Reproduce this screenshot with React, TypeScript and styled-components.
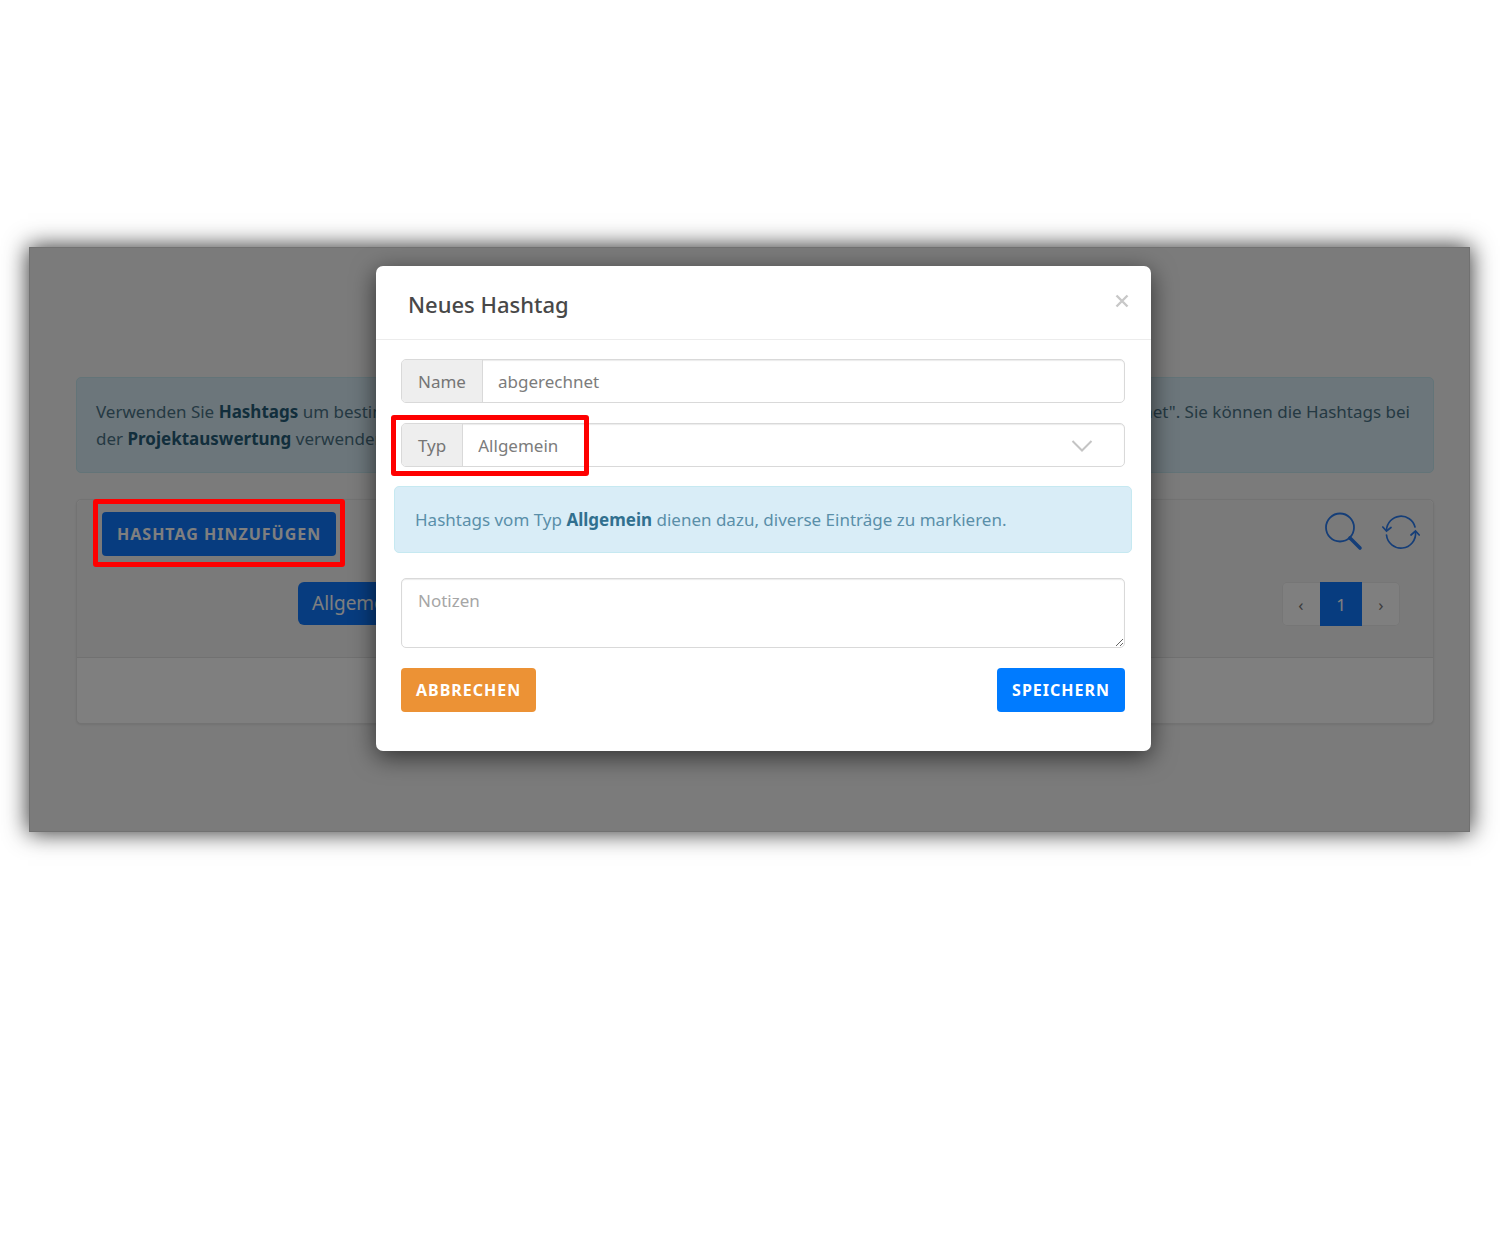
import React from "react";
import styled, { createGlobalStyle } from "styled-components";

const GlobalStyle = createGlobalStyle`
  *, *::before, *::after { box-sizing: border-box; }
  body {
    margin: 0;
    background: #fff;
    color: #757575;
    font-family: "Noto Sans", "Open Sans", sans-serif;
    font-size: 17px;
    line-height: 27px;
  }
  button, input, select, textarea { font: inherit; }
`;

const Page = styled.main`
  padding: 247px 30px 60px 29px;
`;

const Frame = styled.section`
  position: relative;
  min-height: 584px;
  padding: 130px 36px 108px 47px;
  background: #f6f6f6;
  box-shadow: 0 0 22px 1px rgba(0, 0, 0, 0.8);
`;

const Alert = styled.div`
  padding: 20px;
  border: 1px solid #c6e9f1;
  border-radius: 5px;
  background: #d9edf7;
  color: #5a8fa9;

  strong { color: #31708f; }
`;

const PageAlert = styled(Alert)`
  margin-bottom: 26px;
  padding: 20px 23px 20px 19px;
  color: #4a7386;

  strong { color: #245c78; }
`;

const AlertLine = styled.div`
  display: flex;
  justify-content: space-between;
  white-space: nowrap;
`;

const Card = styled.div`
  border: 1px solid #e6e6e6;
  border-radius: 5px;
  background: #fff;
  box-shadow: 0 1px 2px rgba(0, 0, 0, 0.08);
`;

const CardHeader = styled.div`
  height: 158px;
  padding: 12px 13px 0 25px;
  border-bottom: 1px solid #e2e2e2;
  border-radius: 5px 5px 0 0;
  background: #f5f5f5;
`;

const CardBody = styled.div`
  height: 65px;
`;

const Toolbar = styled.div`
  display: flex;
  align-items: flex-start;
  justify-content: space-between;
  margin-bottom: 26px;
`;

const Filters = styled.div`
  display: flex;
  justify-content: space-between;
  padding: 0 20px 0 196px;
`;

const Button = styled.button<{ $tone?: "primary" | "warning" }>`
  height: 44px;
  padding: 0 15px;
  border: 0;
  border-radius: 4px;
  background: ${(p) => (p.$tone === "warning" ? "#ec9235" : "#007bff")};
  color: #fff;
  font-size: 16px;
  font-weight: 700;
  letter-spacing: 1px;
  text-transform: uppercase;
`;

const FilterButton = styled.button`
  height: 43px;
  padding: 0 14px;
  border: 0;
  border-radius: 6px;
  background: #0f79ff;
  color: #fff;
  font-size: 19px;
`;

const PrimaryAction = styled(Button)`
  background: #0f79ff;
`;

const IconRow = styled.div`
  display: flex;
  gap: 18px;
`;

const IconButton = styled.button`
  display: flex;
  padding: 0;
  border: 0;
  background: none;
  color: #2b7cf0;
`;

const Pagination = styled.nav`
  display: flex;
  height: 44px;
  border-radius: 5px;
  background: #fff;
  box-shadow: inset 0 0 0 1px #ececec;
`;

const PageButton = styled.button<{ $active?: boolean }>`
  width: ${(p) => (p.$active ? 42 : 38)}px;
  padding: 0;
  border: 0;
  background: ${(p) => (p.$active ? "#0f79ff" : "transparent")};
  color: ${(p) => (p.$active ? "#fff" : "#777")};
`;

const Highlighted = styled.div`
  position: relative;
  display: flex;
`;

const Marker = styled.span<{ $top: number; $left: number; $width: number; $height: number }>`
  position: absolute;
  z-index: 3;
  top: ${(p) => p.$top}px;
  left: ${(p) => p.$left}px;
  width: ${(p) => p.$width}px;
  height: ${(p) => p.$height}px;
  border: 5px solid #fe0000;
  border-radius: 3px;
  pointer-events: none;
`;

const Backdrop = styled.div`
  position: absolute;
  inset: 0;
  z-index: 1;
  display: flex;
  align-items: flex-start;
  justify-content: center;
  padding: 19px 0 0 28px;
  background: rgba(0, 0, 0, 0.5);
  box-shadow: inset 0 0 0 1px rgba(0, 0, 0, 0.08);
`;

const Dialog = styled.div`
  width: 775px;
  max-width: 100%;
  border-radius: 7px;
  background: #fff;
  box-shadow: 0 6px 24px rgba(0, 0, 0, 0.6);
`;

const DialogHeader = styled.header`
  display: flex;
  align-items: flex-start;
  justify-content: space-between;
  height: 74px;
  padding: 22px 22px 0 32px;
  border-bottom: 1px solid #ececec;
`;

const Title = styled.h2`
  margin: 0;
  color: #484848;
  font-size: 22px;
  font-weight: 500;
  line-height: 32px;
`;

const CloseButton = styled.button`
  display: flex;
  margin-top: 6px;
  padding: 0;
  border: 0;
  background: none;
  color: #c8c8c8;
`;

const Form = styled.form`
  display: flex;
  flex-direction: column;
  gap: 20px;
  padding: 19px 26px 39px 25px;
`;

const InputGroup = styled.div`
  position: relative;
  display: flex;
  height: 44px;
  border: 1px solid #d9d9d9;
  border-radius: 5px;
  box-shadow: inset 0 1px 1px rgba(0, 0, 0, 0.08);
`;

const Addon = styled.label`
  display: flex;
  align-items: center;
  padding: 0 16px;
  border-right: 1px solid #d9d9d9;
  border-radius: 4px 0 0 4px;
  background: #eee;
`;

const TextInput = styled.input`
  flex: 1;
  min-width: 0;
  padding: 0 15px;
  border: 0;
  outline: 0;
  background: transparent;
  color: #7c7c7c;
`;

const Select = styled.select`
  flex: 1;
  min-width: 0;
  padding: 0 15px;
  border: 0;
  outline: 0;
  appearance: none;
  background: transparent;
  color: #7c7c7c;
`;

const SelectArrow = styled.svg`
  position: absolute;
  top: 16px;
  right: 31px;
  pointer-events: none;
`;

const DialogAlert = styled(Alert)`
  margin: -1px -7px 5px;
  padding: 19px 20px;
`;

const Notes = styled.textarea`
  display: block;
  width: 100%;
  height: 70px;
  padding: 8px 16px;
  border: 1px solid #d9d9d9;
  border-radius: 5px;
  outline: 0;
  box-shadow: inset 0 1px 1px rgba(0, 0, 0, 0.08);
  resize: vertical;

  &::placeholder { color: #a6a6a6; }
`;

const Actions = styled.div`
  display: flex;
  justify-content: space-between;
`;

export default function App() {
  return (
    <>
      <GlobalStyle />
      <Page>
        <Frame>
          <PageAlert>
            <AlertLine>
              <span>
                Verwenden Sie <strong>Hashtags</strong> um bestimmte Einträge zu markieren,
              </span>
              <span>z.B. mit "abgerechnet". Sie können die Hashtags bei</span>
            </AlertLine>
            <AlertLine>
              <span>
                der <strong>Projektauswertung</strong> verwenden.
              </span>
            </AlertLine>
          </PageAlert>

          <Card>
            <CardHeader>
              <Toolbar>
                <Highlighted>
                  <PrimaryAction type="button">Hashtag hinzufügen</PrimaryAction>
                  <Marker $top={-13} $left={-9} $width={252} $height={68} />
                </Highlighted>
                <IconRow>
                  <IconButton type="button" aria-label="Suchen">
                    <svg width="40" height="40" viewBox="0 0 40 40" fill="none" stroke="currentColor">
                      <circle cx="16" cy="15.5" r="14" strokeWidth="1.8" />
                      <path d="M26 26 36 36" strokeWidth="3.6" strokeLinecap="round" />
                    </svg>
                  </IconButton>
                  <IconButton type="button" aria-label="Aktualisieren">
                    <svg width="38" height="40" viewBox="0 0 38 40" fill="none" stroke="currentColor" strokeWidth="1.7" strokeLinecap="round">
                      <path d="M4.500 18A14.500 14.500 0 0 1 33 15" />
                      <path d="M.8 15 4.500 19 9 15.500" />
                      <path d="M33.500 20A14.500 14.500 0 0 1 4.500 23" />
                      <path d="M29 23 33.500 19 37.200 23" />
                    </svg>
                  </IconButton>
                </IconRow>
              </Toolbar>
              <Filters>
                <FilterButton type="button">Allgemein</FilterButton>
                <Pagination aria-label="Seiten">
                  <PageButton type="button">‹</PageButton>
                  <PageButton type="button" $active>1</PageButton>
                  <PageButton type="button">›</PageButton>
                </Pagination>
              </Filters>
            </CardHeader>
            <CardBody />
          </Card>

          <Backdrop>
            <Dialog role="dialog" aria-labelledby="dialog-title">
              <DialogHeader>
                <Title id="dialog-title">Neues Hashtag</Title>
                <CloseButton type="button" aria-label="Schließen">
                  <svg width="14" height="14" viewBox="0 0 14 14" stroke="currentColor" strokeWidth="2.4">
                    <path d="M1.500 1.500 12.500 12.500M12.500 1.500 1.500 12.500" />
                  </svg>
                </CloseButton>
              </DialogHeader>
              <Form onSubmit={(e) => e.preventDefault()}>
                <InputGroup>
                  <Addon htmlFor="name">Name</Addon>
                  <TextInput id="name" defaultValue="abgerechnet" />
                </InputGroup>
                <InputGroup>
                  <Addon htmlFor="type">Typ</Addon>
                  <Select id="type" defaultValue="Allgemein">
                    <option>Allgemein</option>
                  </Select>
                  <SelectArrow width="22" height="12" viewBox="0 0 22 12" fill="none" stroke="#c4c4c4" strokeWidth="2">
                    <path d="M1.500 1 11 10.500 20.500 1" />
                  </SelectArrow>
                  <Marker $top={-9} $left={-11} $width={198} $height={61} />
                </InputGroup>
                <DialogAlert>
                  Hashtags vom Typ <strong>Allgemein</strong> dienen dazu, diverse Einträge zu markieren.
                </DialogAlert>
                <Notes aria-label="Notizen" placeholder="Notizen" />
                <Actions>
                  <Button type="button" $tone="warning">Abbrechen</Button>
                  <Button type="submit">Speichern</Button>
                </Actions>
              </Form>
            </Dialog>
          </Backdrop>
        </Frame>
      </Page>
    </>
  );
}
